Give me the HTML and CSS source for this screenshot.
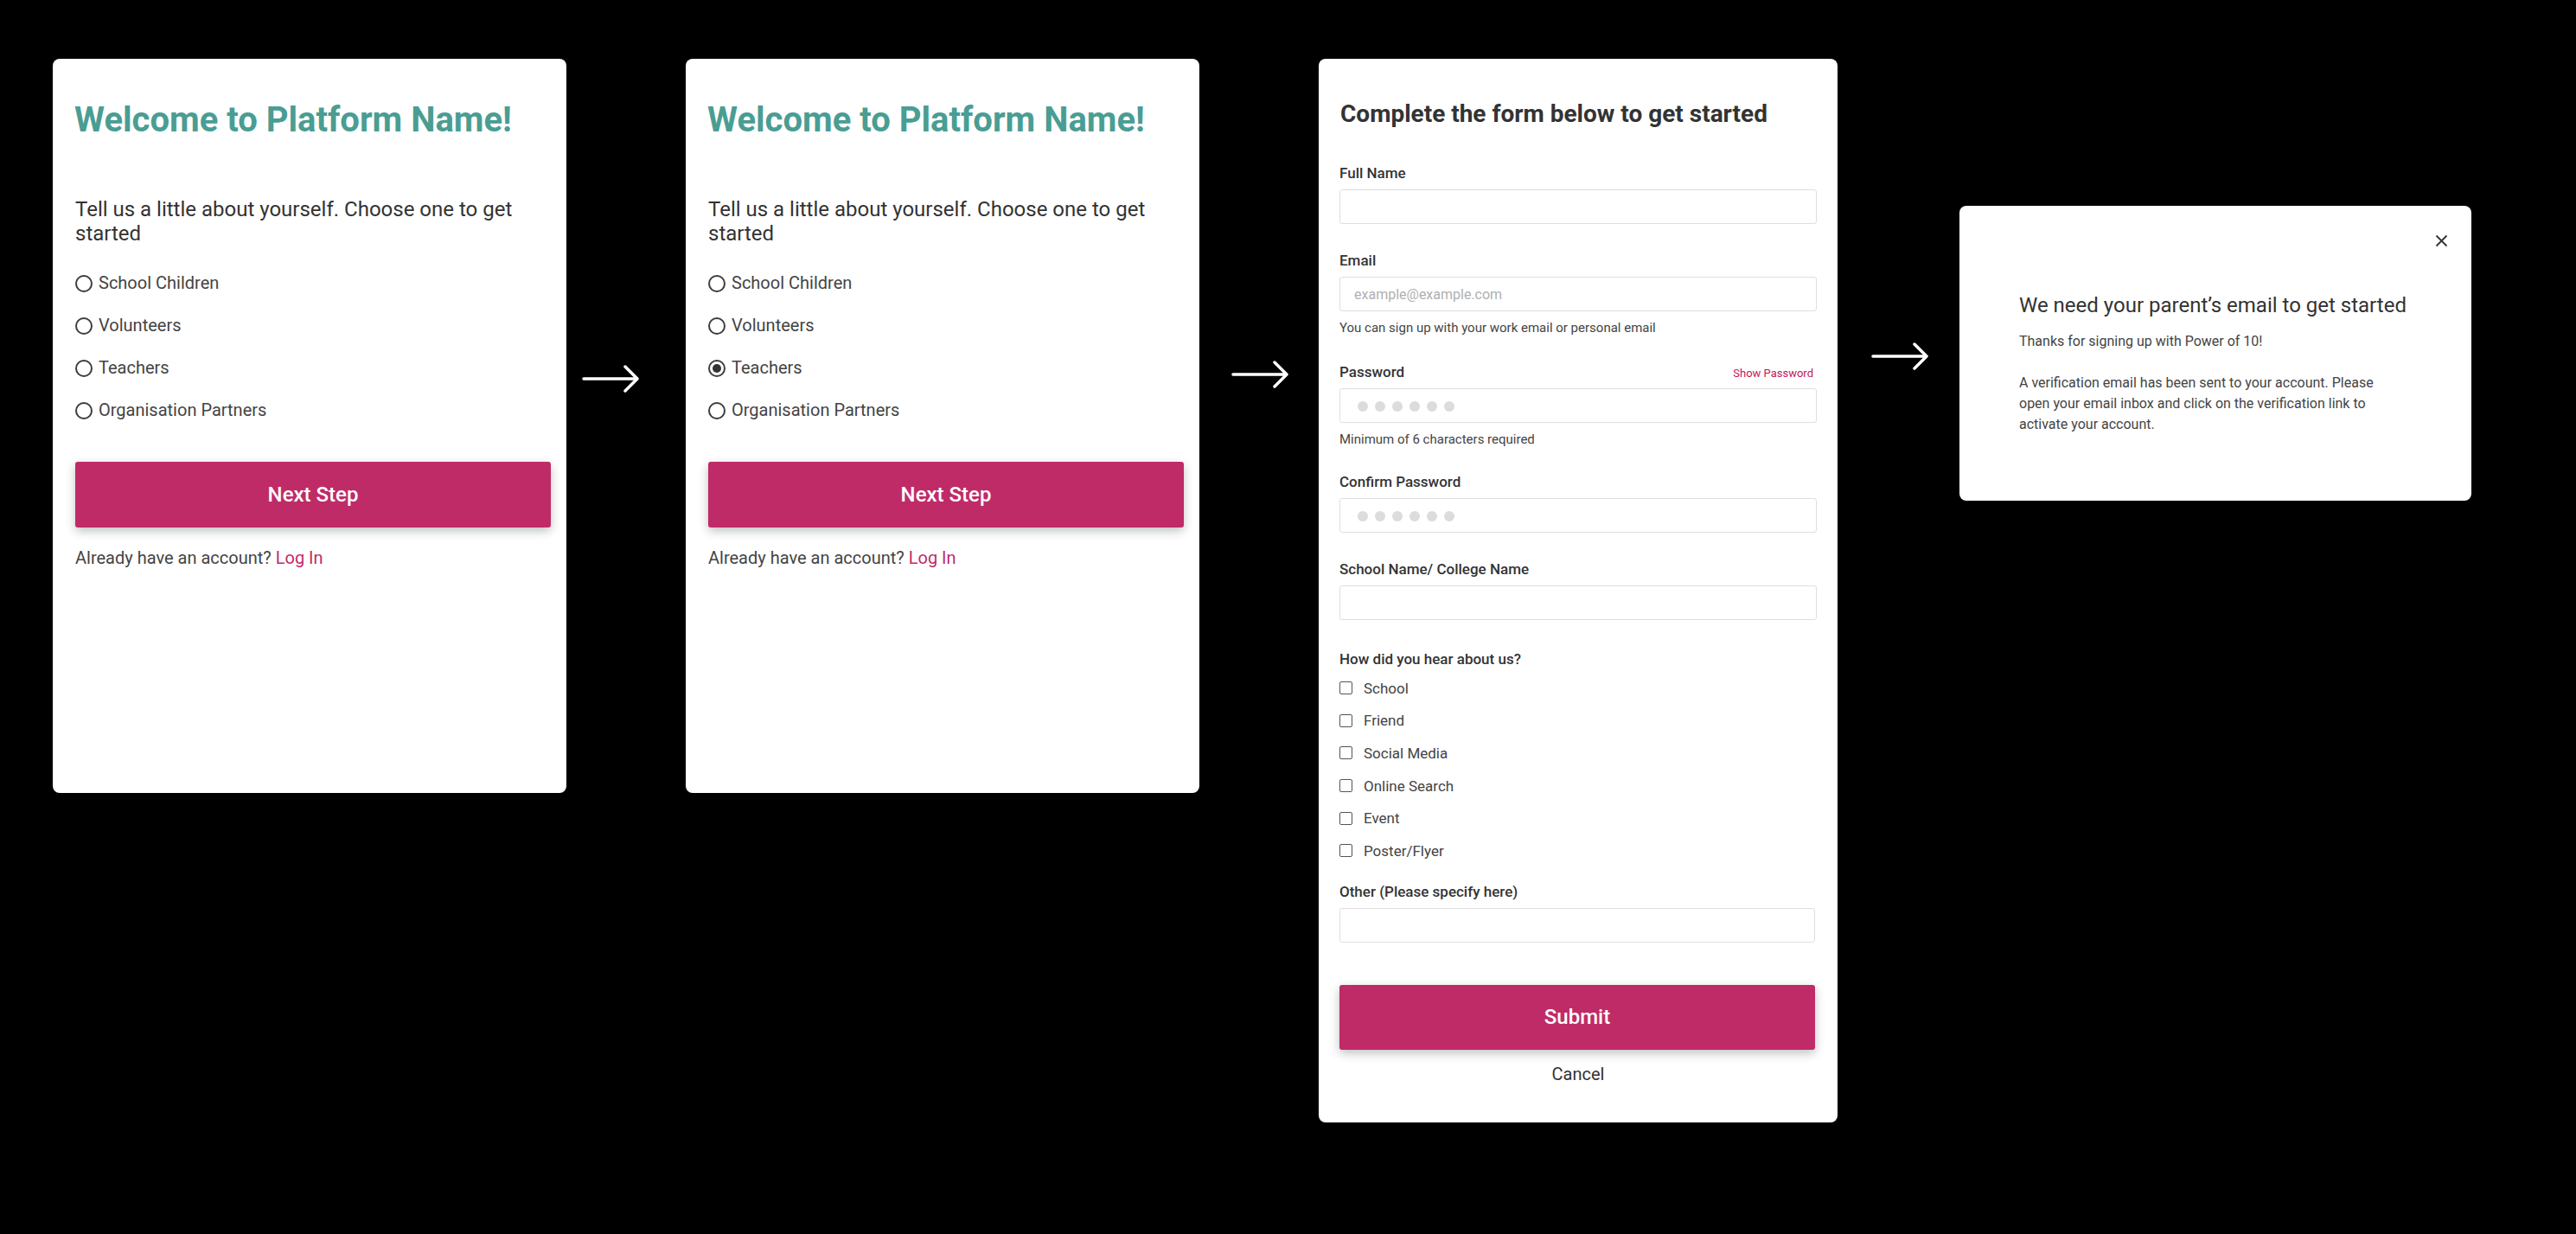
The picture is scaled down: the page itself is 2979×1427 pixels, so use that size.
FILE: index.html
```html
<!DOCTYPE html>
<html lang="en">

<head>
    <meta charset="UTF-8">
    <meta name="viewport" content="width=device-width, initial-scale=1.0">
    <title>Sign up flow</title>
    <link rel="stylesheet" href="styles.css">
</head>

<body>

    <div class="flow">

        <!-- Step 1: choose a role -->
        <section class="card card--choose">
            <h1 class="welcome">Welcome to Platform Name!</h1>
            <p class="intro">Tell us a little about yourself. Choose one to get started</p>
            <ul class="roles">
                <li><span class="radio"></span>School Children</li>
                <li><span class="radio"></span>Volunteers</li>
                <li><span class="radio"></span>Teachers</li>
                <li><span class="radio"></span>Organisation Partners</li>
            </ul>
            <button class="primary-btn">Next Step</button>
            <p class="login-note">Already have an account? <a href="#">Log In</a></p>
        </section>

        <div class="step-arrow step-arrow--one">
            <svg width="66" height="34" viewBox="0 0 66 34"><path d="M2 17H63M50 3L64 17L50 31" /></svg>
        </div>

        <!-- Step 2: role selected -->
        <section class="card card--choose">
            <h1 class="welcome">Welcome to Platform Name!</h1>
            <p class="intro">Tell us a little about yourself. Choose one to get started</p>
            <ul class="roles">
                <li><span class="radio"></span>School Children</li>
                <li><span class="radio"></span>Volunteers</li>
                <li><span class="radio radio--checked"></span>Teachers</li>
                <li><span class="radio"></span>Organisation Partners</li>
            </ul>
            <button class="primary-btn">Next Step</button>
            <p class="login-note">Already have an account? <a href="#">Log In</a></p>
        </section>

        <div class="step-arrow step-arrow--two">
            <svg width="66" height="34" viewBox="0 0 66 34"><path d="M2 17H63M50 3L64 17L50 31" /></svg>
        </div>

        <!-- Step 3: sign up form -->
        <section class="card card--form">
            <h2 class="form-title">Complete the form below to get started</h2>

            <div class="field field--first">
                <label>Full Name</label>
                <input class="input" type="text">
            </div>

            <div class="field">
                <label>Email</label>
                <input class="input" type="email" placeholder="example@example.com">
                <p class="help">You can sign up with your work email or personal email</p>
            </div>

            <div class="field">
                <div class="label-row">
                    <label>Password</label>
                    <a href="#" class="show-pass">Show Password</a>
                </div>
                <div class="input dots">
                    <span></span><span></span><span></span><span></span><span></span><span></span>
                </div>
                <p class="help">Minimum of 6 characters required</p>
            </div>

            <div class="field field--tight">
                <label>Confirm Password</label>
                <div class="input dots">
                    <span></span><span></span><span></span><span></span><span></span><span></span>
                </div>
            </div>

            <div class="field">
                <label>School Name/ College Name</label>
                <input class="input" type="text">
            </div>

            <div class="field field--wide">
                <label>How did you hear about us?</label>
                <ul class="sources">
                    <li><span class="check"></span>School</li>
                    <li><span class="check"></span>Friend</li>
                    <li><span class="check"></span>Social Media</li>
                    <li><span class="check"></span>Online Search</li>
                    <li><span class="check"></span>Event</li>
                    <li><span class="check"></span>Poster/Flyer</li>
                </ul>
            </div>

            <div class="field field--other">
                <label>Other (Please specify here)</label>
                <input class="input input--short" type="text">
            </div>

            <button class="primary-btn submit-btn">Submit</button>
            <p class="cancel">Cancel</p>
        </section>

        <div class="step-arrow step-arrow--three">
            <svg width="66" height="34" viewBox="0 0 66 34"><path d="M2 17H63M50 3L64 17L50 31" /></svg>
        </div>

        <!-- Step 4: verification notice -->
        <section class="card card--notice">
            <div class="notice-close">
                <svg width="15" height="15" viewBox="0 0 15 15"><path d="M1.5 1.5L13.5 13.5M13.5 1.5L1.5 13.5" /></svg>
            </div>
            <h3 class="notice-title">We need your parent’s email to get started</h3>
            <p class="notice-text">Thanks for signing up with Power of 10!</p>
            <p class="notice-text notice-text--gap">A verification email has been sent to your account. Please open your email inbox and click on the verification link to activate your account.</p>
        </section>

    </div>

</body>

</html>
```

FILE: styles.css
```css
body {
    font-family: Roboto, 'Liberation Sans', sans-serif;
    margin: 0;
    padding: 0;
    background-color: #000;
    color: #444;
}

.flow {
    display: flex;
    align-items: flex-start;
    padding: 68px 0 0 61px;
}

.card {
    flex: none;
    box-sizing: border-box;
    background-color: #fff;
    border-radius: 8px;
}

/* 화살표 */
.step-arrow {
    flex: none;
    width: 138px;
}

.step-arrow svg {
    display: block;
    fill: none;
    stroke: #fff;
    stroke-width: 3.5;
    stroke-linecap: round;
    stroke-linejoin: round;
}

.step-arrow--one svg {
    margin: 353px 0 0 18px;
}

.step-arrow--two svg {
    margin: 348px 0 0 37px;
}

.step-arrow--three {
    width: 141px;
}

.step-arrow--three svg {
    margin: 327px 0 0 39px;
}

/* 역할 선택 카드 */
.card--choose {
    width: 594px;
    height: 849px;
    padding: 47px 18px 0 26px;
}

.welcome {
    margin: 0 0 0 -1px;
    font-size: 40px;
    line-height: 48px;
    font-weight: 700;
    color: #4a9d93;
}

.intro {
    margin: 65px 0 0;
    font-size: 24px;
    line-height: 28px;
    color: #333;
}

.roles {
    list-style: none;
    margin: 19px 0 0;
    padding: 0;
}

.roles li {
    display: flex;
    align-items: center;
    height: 49px;
    line-height: 49px;
    font-size: 20px;
    color: #444;
}

.radio {
    position: relative;
    width: 20px;
    height: 20px;
    box-sizing: border-box;
    border: 2px solid #3d3d3d;
    border-radius: 50%;
    margin-right: 7px;
}

.radio--checked::after {
    content: '';
    position: absolute;
    top: 3px;
    left: 3px;
    width: 10px;
    height: 10px;
    border-radius: 50%;
    background-color: #333;
}

.primary-btn {
    display: block;
    width: 550px;
    height: 76px;
    margin-top: 35px;
    border: none;
    border-radius: 3px;
    background-color: #bf2b67;
    color: #fff;
    font-family: inherit;
    font-size: 24px;
    font-weight: 500;
    box-shadow: 0 4px 12px rgba(0, 0, 0, 0.25);
    cursor: pointer;
}

.login-note {
    margin: 23px 0 0;
    font-size: 20px;
    line-height: 24px;
    color: #444;
}

.login-note a {
    color: #bf2b67;
    text-decoration: none;
}

/* 가입 폼 카드 */
.card--form {
    width: 600px;
    padding: 47px 24px 44px 24px;
}

.form-title {
    margin: 0 0 0 1px;
    font-size: 28px;
    line-height: 34px;
    font-weight: 700;
    color: #333;
}

.field {
    margin-top: 32px;
}

.field--first {
    margin-top: 41px;
}

.field--tight {
    margin-top: 30px;
}

.field--wide {
    margin-top: 35px;
}

.field--other {
    margin-top: 18px;
}

.field label {
    display: block;
    font-size: 17px;
    line-height: 20px;
    font-weight: 500;
    color: #333;
}

.label-row {
    display: flex;
    justify-content: space-between;
    align-items: baseline;
    padding-right: 4px;
}

.show-pass {
    font-size: 13px;
    color: #c2185b;
    text-decoration: none;
}

.input {
    display: block;
    box-sizing: border-box;
    width: 100%;
    height: 40px;
    margin-top: 9px;
    padding: 0 16px;
    border: 1px solid #dedede;
    border-radius: 3px;
    background-color: #fff;
    font-family: inherit;
    font-size: 16px;
    color: #333;
    outline: none;
}

.input::placeholder {
    color: #b0b0b0;
}

.input--short {
    width: 550px;
}

.dots {
    display: flex;
    align-items: center;
    gap: 8px;
    padding: 2px 20px 0;
}

.dots span {
    width: 12px;
    height: 12px;
    border-radius: 50%;
    background-color: #dcdcdc;
}

.help {
    margin: 10px 0 0;
    font-size: 15px;
    line-height: 18px;
    color: #444;
}

.sources {
    list-style: none;
    margin: 5px 0 0;
    padding: 0;
}

.sources li {
    display: flex;
    align-items: center;
    height: 37.6px;
    font-size: 17px;
    color: #444;
}

.check {
    width: 15px;
    height: 15px;
    box-sizing: border-box;
    border: 1.5px solid #555;
    border-radius: 2px;
    margin-right: 13px;
}

.submit-btn {
    height: 75px;
    margin-top: 49px;
}

.cancel {
    margin: 16px 0 0;
    font-size: 20px;
    line-height: 24px;
    text-align: center;
    color: #333;
}

/* 안내 카드 */
.card--notice {
    width: 592px;
    margin-top: 170px;
    padding: 34px 27px 76px 69px;
}

.notice-close {
    display: flex;
    justify-content: flex-end;
    height: 14px;
}

.notice-close svg {
    display: block;
    margin-top: -1px;
    fill: none;
    stroke: #333;
    stroke-width: 1.8;
}

.notice-title {
    margin: 53px 0 0;
    font-size: 24px;
    line-height: 28px;
    font-weight: 400;
    color: #333;
}

.notice-text {
    margin: 16px 0 0;
    max-width: 425px;
    font-size: 16px;
    line-height: 24px;
    color: #444;
}

.notice-text--gap {
    margin-top: 24px;
}
```
